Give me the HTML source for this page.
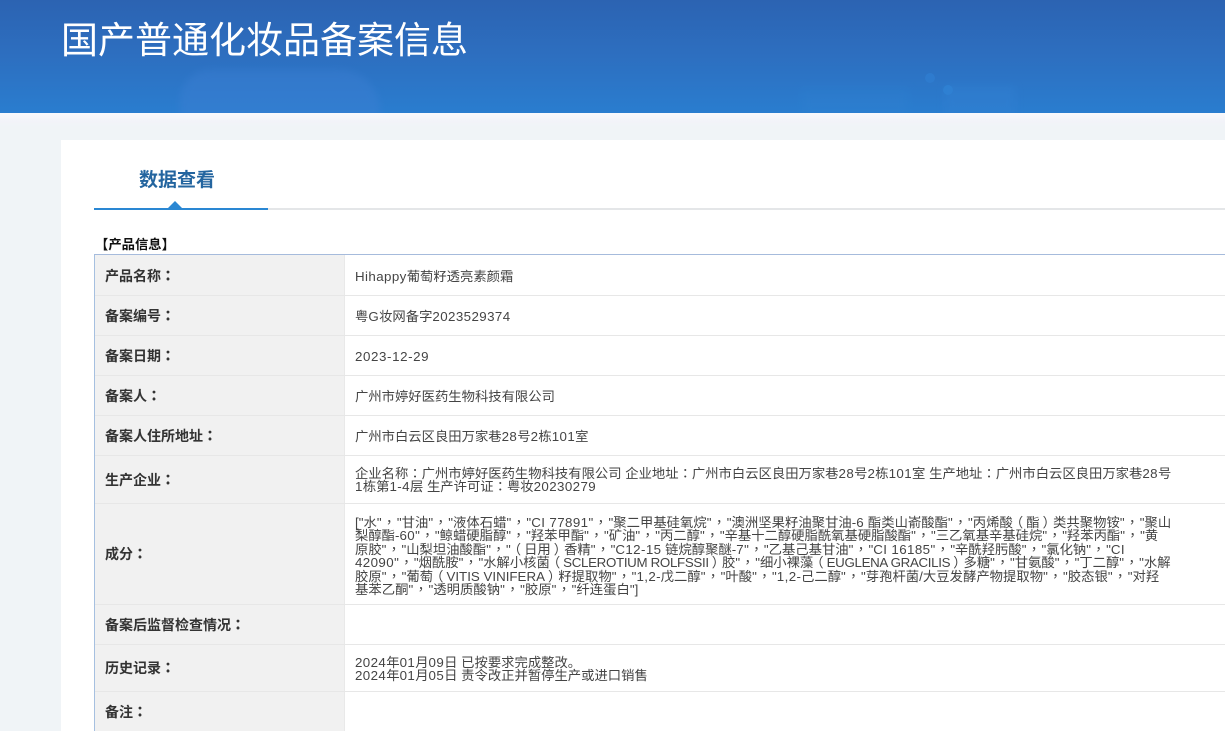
<!DOCTYPE html>
<html>
<head>
<meta charset="utf-8">
<title>国产普通化妆品备案信息</title>
<style>
html,body{margin:0;padding:0;width:1225px;height:731px;overflow:hidden;background:#f0f4f7;}
body{position:relative;font-family:"Liberation Sans","Noto Sans CJK SC",sans-serif;text-spacing-trim:space-all;}
.abs{position:absolute;white-space:nowrap;}
#band{left:0;top:113px;width:1225px;height:14px;background:linear-gradient(180deg,#f8f9fc,#f2f3f9 60%,#f0f4f7);}
#hdr{left:0;top:0;width:1225px;height:113px;background:linear-gradient(180deg,#2c63b2 0%,#2d6fc0 50%,#2a7dcf 100%);overflow:hidden;}
#hdr i{position:absolute;display:block;}
#title{left:61px;top:16px;font-size:37px;line-height:50px;color:#fff;}
#card{left:61px;top:140px;width:1164px;height:591px;background:#fff;}
#tab{left:139px;top:167px;font-size:19px;line-height:28px;font-weight:bold;color:#24659f;}
#l1{left:94px;top:208px;width:1131px;height:2px;background:#e4e6e8;}
#l2{left:94px;top:208px;width:174px;height:2px;background:#2a87d3;}
#tri{left:168px;top:201px;width:0;height:0;border-left:7px solid transparent;border-right:7px solid transparent;border-bottom:7px solid #2a87d3;}
#info{left:95px;top:236px;font-size:13.33px;line-height:18px;font-weight:bold;color:#111;}
#tbl{left:94px;top:254px;width:1131px;height:477px;border-top:1px solid #a6bbdc;border-left:1px solid #a6c0e0;box-sizing:border-box;background:#fff;}
#lab{position:absolute;left:0;top:0;width:249px;height:476px;background:#f1f1f1;}
.sep{position:absolute;left:0;width:1130px;height:1px;background:#e7e7e7;}
.vs{position:absolute;left:249px;top:0;width:1px;height:476px;background:#e9e9e9;}
.k{position:absolute;left:105px;font-size:14px;font-weight:bold;color:#333;line-height:18px;white-space:nowrap;}
.k b{font-family:"Noto Sans CJK TC",sans-serif;}
.v{position:absolute;left:355px;font-size:13.33px;color:#444;line-height:18px;white-space:nowrap;}
.m div{height:13.4px;line-height:13.4px;}
.v b,.v i{font-weight:normal;font-style:normal;font-family:"Noto Sans CJK TC",sans-serif;}
.v i{margin:0 .9px;}
.v b.o{position:relative;left:-3px;}
.v b.c{position:relative;left:3px;}
.v u{text-decoration:none;letter-spacing:.4px;}
.v u.n{letter-spacing:-.33px;}
.v u.z{letter-spacing:0;}
</style>
</head>
<body>
<div class="abs" id="band"></div>
<div class="abs" id="hdr">
<i style="left:180px;top:70px;width:200px;height:60px;background:#3f80d4;opacity:.4;border-radius:30px 40px 0 0;filter:blur(4px)"></i>
<i style="left:945px;top:85px;width:70px;height:48px;background:#3482d4;opacity:.35;filter:blur(4px)"></i>
<i style="left:800px;top:88px;width:110px;height:33px;background:#2f83d2;opacity:.25;filter:blur(5px)"></i>
<i style="left:925px;top:73px;width:10px;height:10px;border-radius:50%;background:#2f7dd0;opacity:.8"></i>
<i style="left:943px;top:85px;width:10px;height:10px;border-radius:50%;background:#2f82d3;opacity:.8"></i>
</div>
<div class="abs" id="title">国产普通化妆品备案信息</div>
<div class="abs" id="card"></div>
<div class="abs" id="tab">数据查看</div>
<div class="abs" id="l1"></div>
<div class="abs" id="l2"></div>
<div class="abs" id="tri"></div>
<div class="abs" id="info">【产品信息】</div>
<div class="abs" id="tbl">
<div id="lab"></div>
<div class="vs"></div>
<div class="sep" style="top:40px"></div>
<div class="sep" style="top:80px"></div>
<div class="sep" style="top:120px"></div>
<div class="sep" style="top:160px"></div>
<div class="sep" style="top:200px"></div>
<div class="sep" style="top:248px"></div>
<div class="sep" style="top:349px"></div>
<div class="sep" style="top:389px"></div>
<div class="sep" style="top:436px"></div>
</div>

<div class="k" style="top:267px">产品名称<b>：</b></div>
<div class="k" style="top:307px">备案编号<b>：</b></div>
<div class="k" style="top:347px">备案日期<b>：</b></div>
<div class="k" style="top:387px">备案人<b>：</b></div>
<div class="k" style="top:427px">备案人住所地址<b>：</b></div>
<div class="k" style="top:471px">生产企业<b>：</b></div>
<div class="k" style="top:545px">成分<b>：</b></div>
<div class="k" style="top:616px">备案后监督检查情况<b>：</b></div>
<div class="k" style="top:659px">历史记录<b>：</b></div>
<div class="k" style="top:703px">备注<b>：</b></div>

<div class="v" style="top:268px"><u>Hihappy</u>葡萄籽透亮素颜霜</div>
<div class="v" style="top:308px">粤<u>G</u>妆网备字<u>2023529374</u></div>
<div class="v" style="top:348px"><u style="letter-spacing:.6px">2023-12-29</u></div>
<div class="v" style="top:388px">广州市婷好医药生物科技有限公司</div>
<div class="v" style="top:428px">广州市白云区良田万家巷<u>28</u>号<u>2</u>栋<u>101</u>室</div>
<div class="v m" style="top:466px">
<div>企业名称<b>：</b>广州市婷好医药生物科技有限公司 企业地址<b>：</b>广州市白云区良田万家巷<u>28</u>号<u>2</u>栋<u>101</u>室 生产地址<b>：</b>广州市白云区良田万家巷<u>28</u>号</div>
<div><u>1</u>栋第<u>1-4</u>层 生产许可证<b>：</b>粤妆<u>20230279</u></div>
</div>
<div class="v m" style="top:515px">
<div style="letter-spacing:.04px">["水"<i>，</i>"甘油"<i>，</i>"液体石蜡"<i>，</i>"<u>CI 77891</u>"<i>，</i>"聚二甲基硅氧烷"<i>，</i>"澳洲坚果籽油聚甘油-<u>6</u> 酯类山嵛酸酯"<i>，</i>"丙烯酸<b class="o">（</b>酯<b class="c">）</b>类共聚物铵"<i>，</i>"聚山</div>
<div>梨醇酯-<u>60</u>"<i>，</i>"鲸蜡硬脂醇"<i>，</i>"羟苯甲酯"<i>，</i>"矿油"<i>，</i>"丙二醇"<i>，</i>"辛基十二醇硬脂酰氧基硬脂酸酯"<i>，</i>"三乙氧基辛基硅烷"<i>，</i>"羟苯丙酯"<i>，</i>"黄</div>
<div>原胶"<i>，</i>"山梨坦油酸酯"<i>，</i>"<b class="o">（</b>日用<b class="c">）</b>香精"<i>，</i>"<u>C12-15</u> 链烷醇聚醚-<u>7</u>"<i>，</i>"乙基己基甘油"<i>，</i>"<u>CI 16185</u>"<i>，</i>"辛酰羟肟酸"<i>，</i>"氯化钠"<i>，</i>"<u>CI</u></div>
<div><u>42090</u>"<i>，</i>"烟酰胺"<i>，</i>"水解小核菌<b class="o">（</b><u class="n">SCLEROTIUM ROLFSSII</u><b class="c">）</b>胶"<i>，</i>"细小裸藻<b class="o">（</b><u class="n">EUGLENA GRACILIS</u><b class="c">）</b>多糖"<i>，</i>"甘氨酸"<i>，</i>"丁二醇"<i>，</i>"水解</div>
<div style="letter-spacing:.03px">胶原"<i>，</i>"葡萄<b class="o">（</b><u class="z">VITIS VINIFERA</u><b class="c">）</b>籽提取物"<i>，</i>"<u>1,2</u>-戊二醇"<i>，</i>"叶酸"<i>，</i>"<u>1,2</u>-己二醇"<i>，</i>"芽孢杆菌/大豆发酵产物提取物"<i>，</i>"胶态银"<i>，</i>"对羟</div>
<div style="letter-spacing:.05px">基苯乙酮"<i>，</i>"透明质酸钠"<i>，</i>"胶原"<i>，</i>"纤连蛋白"]</div>
</div>
<div class="v m" style="top:656px">
<div><u>2024</u>年<u>01</u>月<u>09</u>日 已按要求完成整改。</div>
<div><u>2024</u>年<u>01</u>月<u>05</u>日 责令改正并暂停生产或进口销售</div>
</div>
</body>
</html>
